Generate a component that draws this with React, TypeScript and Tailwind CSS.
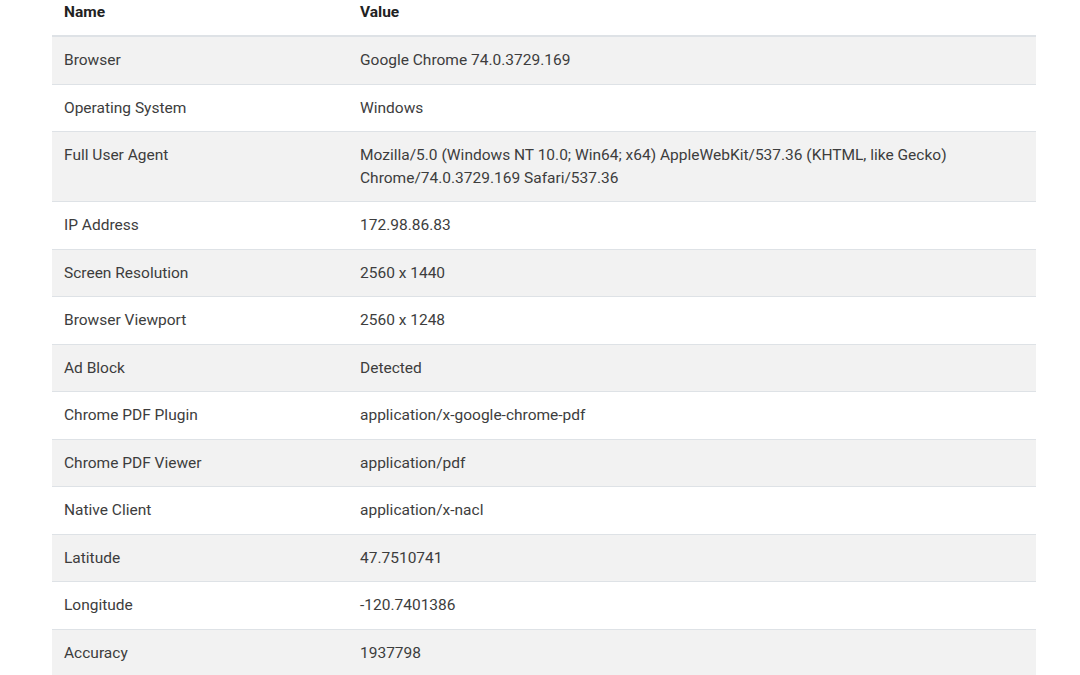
const rows: [string, string][] = [
  ["Browser", "Google Chrome 74.0.3729.169"],
  ["Operating System", "Windows"],
  [
    "Full User Agent",
    "Mozilla/5.0 (Windows NT 10.0; Win64; x64) AppleWebKit/537.36 (KHTML, like Gecko) Chrome/74.0.3729.169 Safari/537.36",
  ],
  ["IP Address", "172.98.86.83"],
  ["Screen Resolution", "2560 x 1440"],
  ["Browser Viewport", "2560 x 1248"],
  ["Ad Block", "Detected"],
  ["Chrome PDF Plugin", "application/x-google-chrome-pdf"],
  ["Chrome PDF Viewer", "application/pdf"],
  ["Native Client", "application/x-nacl"],
  ["Latitude", "47.7510741"],
  ["Longitude", "-120.7401386"],
  ["Accuracy", "1937798"],
];

function App() {
  return (
    <div className="min-h-screen bg-white font-['Roboto',sans-serif] text-[15.5px] leading-[22.5px] text-[#3d3d3d] overflow-hidden">
      <div className="ml-[52px] w-[984px] -mt-[11.5px]">
        <table className="w-full border-collapse">
          <thead>
            <tr className="border-b-2 border-[#dee2e6]">
              <th className="w-[296px] px-3 py-3 text-left font-bold text-[#222]">Name</th>
              <th className="px-3 py-3 text-left font-bold text-[#222]">Value</th>
            </tr>
          </thead>
          <tbody>
            {rows.map(([name, value], i) => (
              <tr
                key={name}
                className={`border-b border-[#dee2e6] ${i % 2 === 0 ? "bg-[#f2f2f2]" : "bg-white"}`}
              >
                <td className="px-3 py-3 align-top">{name}</td>
                <td className="px-3 py-3 align-top pr-[80px]">{value}</td>
              </tr>
            ))}
          </tbody>
        </table>
      </div>
    </div>
  );
}

export default App;
